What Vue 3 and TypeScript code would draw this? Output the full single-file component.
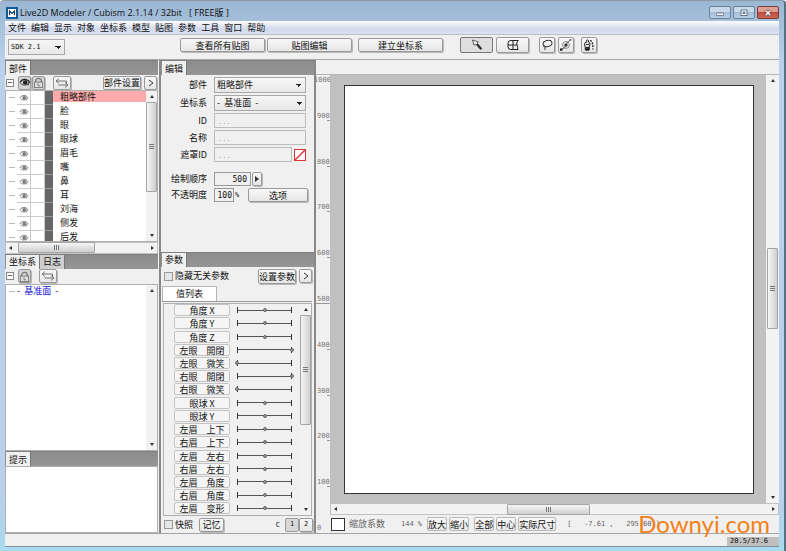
<script setup lang="ts">
import { ref } from 'vue'

interface Param { name: string; value: number }

const menus: string[] = ['文件', '编辑', '显示', '对象', '坐标系', '模型', '贴图', '参数', '工具', '窗口', '帮助']
const parts: string[] = ['粗略部件', '脸', '眼', '眼球', '眉毛', '嘴', '鼻', '耳', '刘海', '侧发', '后发']
const selectedPart = ref<string>('粗略部件')
const rulerMarks: number[] = [900, 800, 700, 600, 500, 400, 300, 200, 100, 0]
const params = ref<Param[]>([
  { name: '角度 X', value: 50 },
  { name: '角度 Y', value: 50 },
  { name: '角度 Z', value: 50 },
  { name: '左眼\u3000開閉', value: 100 },
  { name: '左眼\u3000微笑', value: 0 },
  { name: '右眼\u3000開閉', value: 100 },
  { name: '右眼\u3000微笑', value: 0 },
  { name: '眼球 X', value: 50 },
  { name: '眼球 Y', value: 50 },
  { name: '左眉\u3000上下', value: 50 },
  { name: '右眉\u3000上下', value: 50 },
  { name: '左眉\u3000左右', value: 50 },
  { name: '右眉\u3000左右', value: 50 },
  { name: '左眉\u3000角度', value: 50 },
  { name: '右眉\u3000角度', value: 50 },
  { name: '左眉\u3000变形', value: 50 },
])
const hideUnrelated = ref<boolean>(false)
const snapshot = ref<boolean>(false)
const order = ref<string>('500')
const opacity = ref<string>('100')
</script>

<template>
  <div class="window">
    <svg class="defs" aria-hidden="true">
      <symbol id="eye" viewBox="0 0 12 9">
        <path d="M1 4.5C2.5 1.8 5 1.2 7 1.6C9 2 10.4 3.2 11 4.6" fill="none" stroke="currentColor" stroke-width="1.2" />
        <path d="M1.5 5.4C4 7.6 8 7.6 10.6 5" fill="none" stroke="currentColor" stroke-width=".8" />
        <circle cx="6.2" cy="4.4" r="2.2" fill="currentColor" />
        <path d="M9.5 3.6L9 7.4" stroke="currentColor" stroke-width=".8" />
      </symbol>
      <symbol id="lock" viewBox="0 0 12 12">
        <path d="M3 6V4C3 .6 9 .6 9 4V6" fill="none" stroke="currentColor" stroke-width="1.3" />
        <rect x="1.5" y="5.5" width="9" height="6" fill="#ddd" stroke="currentColor" />
        <path d="M5.5 7V9.5H7.5" fill="none" stroke="currentColor" />
      </symbol>
      <symbol id="swap" viewBox="0 0 14 10">
        <path d="M4 .5L1 3L4 5.5M1 3H11.5V6M10 4.5L13 7L10 9.5M13 7H3.5" fill="none" stroke="currentColor" stroke-width=".9" />
      </symbol>
    </svg>

    <header class="titlebar">
      <svg class="logo" viewBox="0 0 12 12"><rect x="1" y="1" width="10" height="10" fill="#fff" stroke="#145a96" stroke-width="2" /><path d="M3.5 8.2V4L6 6.5L8.5 4V8.2" fill="none" stroke="#174a78" stroke-width="1.2" /></svg>
      <h1>Live2D Modeler / Cubism 2.1.14 / 32bit &nbsp; [ FREE版 ]</h1>
      <div class="winbtns">
        <button aria-label="最小化"><svg viewBox="0 0 12 8"><rect x="2.5" y="4" width="7" height="2.6" rx=".8" fill="#fff" stroke="#4d6077" stroke-width=".8" /></svg></button>
        <button aria-label="最大化"><svg viewBox="0 0 12 8"><rect x="3" y="1" width="6" height="5.6" fill="#fff" stroke="#4d6077" stroke-width=".8" /><rect x="5" y="3" width="2" height="1.6" fill="none" stroke="#4d6077" stroke-width=".8" /></svg></button>
        <button class="close" aria-label="关闭"><svg viewBox="0 0 12 8"><path d="M3.5 1.5L8.5 6.5M8.5 1.5L3.5 6.5" stroke="#6b3434" stroke-width="2.8" /><path d="M3.7 1.7L8.3 6.3M8.3 1.7L3.7 6.3" stroke="#fff" stroke-width="1.6" /></svg></button>
      </div>
    </header>

    <div class="client">
      <nav class="menubar">
        <a v-for="m in menus" :key="m" href="#">{{ m }}</a>
      </nav>

      <div class="toolbar">
        <select class="sdk combo mono" aria-label="SDK"><option>SDK 2.1</option></select>
        <div class="group main-actions">
          <button class="btn wide">查看所有贴图</button>
          <button class="btn wide">贴图编辑</button>
          <button class="btn wide apart">建立坐标系</button>
        </div>
        <div class="group modes">
          <button class="btn mode active" aria-label="选择"><svg viewBox="0 0 12 12"><path d="M1.5 1L3 6.2L4.6 5L9.4 10.6L10.8 9.4L6 4.2L7.4 3Z" fill="#fff" stroke="#333" stroke-width=".8" /><path d="M5.8 5L10.4 10" stroke="#111" stroke-width="1.2" /></svg></button>
          <button class="btn mode" aria-label="网格"><svg viewBox="0 0 12 12"><path d="M11.4 1.5H4Q1 1.5 1 4V8Q1 10.5 4 10.5H11.4M11 1.5Q9 4 10 6Q11 8.5 10.6 10.5M6 1.5V10.5M1 6H10" fill="none" stroke="#222" /></svg></button>
        </div>
        <div class="group tools">
          <button class="btn tool" aria-label="套索"><svg viewBox="0 0 12 12"><ellipse cx="6.5" cy="4.5" rx="4.5" ry="3" fill="none" stroke="#333" transform="rotate(-15 6.5 4.5)" /><path d="M3 6Q2 7.8 3.6 8T3.6 11" fill="none" stroke="#333" /></svg></button>
          <button class="btn tool" aria-label="变形路径"><svg viewBox="0 0 12 12"><circle cx="6" cy="6" r="3.4" fill="none" stroke="#888" /><circle cx="6" cy="6" r="1.6" fill="#222" /><path d="M1 10.5Q5 10 6 6T11 1" fill="none" stroke="#444" stroke-width=".8" /><rect x="0" y="9.5" width="2.4" height="2.2" fill="#111" /><rect x="9.6" y="0" width="2" height="1.6" fill="#777" /></svg></button>
        </div>
        <button class="btn tool glue" aria-label="胶水"><svg viewBox="0 0 12 12"><path d="M2.2 11V8L1.5 5.2Q1.5 3.4 3.4 3.2V1.5Q4.5 .2 5.6 1.5V3.2Q7.3 3.4 7 5.4L6.2 8V11Z" fill="#ddd" stroke="#222" /><path d="M3 8.5H6V11H3ZM3.2 5.5H5.8" fill="#222" stroke="#222" /><path d="M7.2 1.4Q10.5 3 9.8 10.5" fill="none" stroke="#222" stroke-width="1.5" stroke-dasharray="1.8 1.2" /></svg></button>
      </div>

      <main class="body">
        <section class="column left">
          <div class="panel">
            <div class="tabs"><button class="tab">部件</button></div>
            <div class="tools-row">
              <button class="fold" aria-label="折叠">−</button>
              <button class="btn sq" aria-label="显示"><svg class="eye dark"><use href="#eye" /></svg></button>
              <button class="btn sq" aria-label="锁定"><svg class="lock"><use href="#lock" /></svg></button>
              <button class="btn swap" aria-label="切换"><svg><use href="#swap" /></svg></button>
              <button class="btn push">部件设置</button>
              <button class="btn more" aria-label="更多"><svg viewBox="0 0 6 8"><path d="M1 1L5 4L1 7" fill="none" stroke="#333" /></svg></button>
            </div>
            <div class="tree-wrap">
              <ul class="tree">
                <li v-for="p in parts" :key="p" :class="{ selected: p === selectedPart }" @click="selectedPart = p">
                  <span class="branch"></span>
                  <span class="cell"><svg class="eye"><use href="#eye" /></svg></span>
                  <span class="cell"></span>
                  <span class="stripe"></span>
                  <span class="label">{{ p }}</span>
                </li>
              </ul>
              <div class="vbar"><i class="arr up"></i><b class="thumb parts-thumb"></b><i class="arr down"></i></div>
            </div>
            <div class="hbar"><i class="arr lt"></i><b class="thumb parts-hthumb"></b><i class="arr rt"></i></div>
          </div>

          <div class="panel">
            <div class="tabs"><button class="tab">坐标系</button><button class="tab off">日志</button></div>
            <div class="tools-row">
              <button class="fold" aria-label="折叠">−</button>
              <button class="btn sq" aria-label="锁定"><svg class="lock"><use href="#lock" /></svg></button>
              <button class="btn swap" aria-label="切换"><svg><use href="#swap" /></svg></button>
            </div>
            <div class="tree-wrap">
              <ul class="tree deform"><li><span class="branch"></span><span class="base">-&nbsp; 基准面 &nbsp;-</span></li></ul>
              <div class="vbar"><i class="arr up"></i><i class="arr down"></i></div>
            </div>
          </div>

          <div class="panel">
            <div class="tabs"><button class="tab">提示</button></div>
            <div class="hint"></div>
          </div>
        </section>

        <section class="column middle">
          <div class="panel">
            <div class="tabs"><button class="tab">编辑</button></div>
            <form class="form" @submit.prevent>
              <label for="f-part">部件</label>
              <select id="f-part" class="combo"><option>粗略部件</option></select>
              <label for="f-deform">坐标系</label>
              <select id="f-deform" class="combo"><option>-&nbsp; 基准面 &nbsp;-</option></select>
              <label for="f-id">ID</label>
              <input id="f-id" class="field" placeholder="..." disabled />
              <label for="f-name">名称</label>
              <input id="f-name" class="field" placeholder="..." disabled />
              <label for="f-mask">遮罩ID</label>
              <div class="inline">
                <input id="f-mask" class="field" placeholder="..." disabled />
                <svg class="nomask" viewBox="0 0 12 12"><rect x=".5" y=".5" width="11" height="11" fill="#fff" stroke="#d33" /><path d="M1 11L11 1" stroke="#d33" stroke-width="1.4" /></svg>
              </div>
              <label for="f-order" class="spaced">绘制顺序</label>
              <div class="inline spaced tight">
                <input id="f-order" v-model="order" class="field num order" />
                <button class="btn step" aria-label="绘制顺序选项"><svg viewBox="0 0 6 8"><path d="M1 1L5 4L1 7Z" fill="#333" /></svg></button>
              </div>
              <label for="f-opacity">不透明度</label>
              <div class="inline tight">
                <input id="f-opacity" v-model="opacity" class="field num opacity" />
                <span class="mono">%</span>
                <button class="btn options">选项</button>
              </div>
            </form>
          </div>

          <div class="panel">
            <div class="tabs"><button class="tab">参数</button></div>
            <div class="param-tools">
              <label class="check"><input v-model="hideUnrelated" type="checkbox" />隐藏无关参数</label>
              <button class="btn">设置参数</button>
              <button class="btn more" aria-label="更多"><svg viewBox="0 0 6 8"><path d="M1 1L5 4L1 7" fill="none" stroke="#333" /></svg></button>
            </div>
            <div class="subtabs"><button class="subtab">值列表</button></div>
            <div class="param-wrap">
              <div class="params">
                <div v-for="(p, i) in params" :key="p.name" class="param">
                  <label :for="'param-' + i">{{ p.name }}</label>
                  <input :id="'param-' + i" v-model.number="p.value" type="range" min="0" max="100" />
                </div>
              </div>
              <div class="vbar"><i class="arr up"></i><b class="thumb param-thumb"></b><i class="arr down"></i></div>
            </div>
            <div class="param-foot">
              <label class="check"><input v-model="snapshot" type="checkbox" />快照</label>
              <button class="btn">记忆</button>
              <span class="mono push-label">C</span>
              <button class="btn page mono pressed">1</button>
              <button class="btn page mono">2</button>
            </div>
          </div>
        </section>

        <section class="view">
          <div class="ruler-top"></div>
          <div class="ruler mono">
            <div v-for="(n, i) in rulerMarks" :key="n" class="mark" :class="{ mid: n === 500, zero: n === 0 }">
              <span v-if="i === 0" class="first">1000</span>
              <span class="last">{{ n }}</span>
            </div>
          </div>
          <div class="stage"><div class="sheet"></div></div>
          <div class="vbar"><i class="arr up"></i><b class="thumb view-thumb"></b><i class="arr down"></i></div>
          <div class="hbar"><i class="arr lt"></i><b class="thumb view-hthumb"></b><i class="arr rt"></i></div>
          <div class="zoombar">
            <button class="swatch" aria-label="背景颜色"></button>
            <span class="muted">缩放系数</span>
            <span class="muted mono zoom">144 %</span>
            <button class="btn flat">放大</button>
            <button class="btn flat">缩小</button>
            <button class="btn flat next">全部</button>
            <button class="btn flat">中心</button>
            <button class="btn flat">实际尺寸</button>
            <span class="muted mono coords">[ &nbsp;&nbsp;-7.61 ,&nbsp; &nbsp;295.60 ]</span>
          </div>
          <div class="watermark">Downyi.com</div>
        </section>
      </main>

      <footer class="status"><span class="mono">20.5/37.6</span></footer>
    </div>
  </div>
</template>

<style>
body {
  margin: 0;
}
</style>

<style scoped>
* {
  box-sizing: border-box;
}
.window {
  display: flex;
  flex-direction: column;
  height: 100vh;
  min-height: 480px;
  padding: 0 5px 4px;
  border-top: 1px solid #8c9aa8;
  border-right: 2px solid #4f7180;
  border-radius: 4px 4px 0 0;
  background: linear-gradient(#9ab6d2, #b9d1ea 60px, #b9d1ea 90%, #a9daf0);
  color: #111;
  font: 9px/12px "Noto Sans CJK SC", sans-serif;
  overflow: hidden;
}
.defs {
  position: absolute;
  width: 0;
  height: 0;
}
button, input, select {
  margin: 0;
  padding: 0;
  font: inherit;
  color: inherit;
}
svg {
  display: block;
}
.mono {
  font-family: "DejaVu Sans Mono", monospace;
  font-size: 7px;
}

/* title bar */
.titlebar {
  display: flex;
  align-items: center;
  flex: none;
  height: 20px;
  padding: 3px 0 0 1px;
}
.logo {
  width: 12px;
  height: 12px;
}
h1 {
  flex: 1;
  margin: 0 0 0 2px;
  font: 9px/14px "Open Sans", "Noto Sans CJK SC", sans-serif;
}
.winbtns {
  display: flex;
  gap: 2px;
}
.winbtns button {
  display: grid;
  place-items: center;
  width: 22px;
  height: 13px;
  border: 1px solid #6a8199;
  border-radius: 2px;
  background: linear-gradient(#c8d9ea 50%, #a4bcd6 50%, #b8d0e8);
}
.winbtns svg {
  width: 12px;
  height: 8px;
}
.winbtns .close {
  border-color: #7a3a38;
  background: linear-gradient(#dda096 40%, #bd4a3a 50%, #cc6a55);
}

.client {
  display: flex;
  flex: 1;
  flex-direction: column;
  min-height: 0;
  border-bottom: 1px solid #7d8d9c;
  background: #f0f0f0;
}
.menubar {
  display: flex;
  flex: none;
  gap: 5px;
  height: 14px;
  padding: 0 3px;
  border-bottom: 1px solid #b9bfcc;
  background: linear-gradient(#fdfdff, #d3daed 60%, #dbe1f2);
  line-height: 13px;
}
.menubar a {
  color: #111;
  text-decoration: none;
}

/* controls */
.btn {
  display: grid;
  place-items: center;
  padding: 0;
  border: 1px solid #9a9a9a;
  border-radius: 2px;
  background: linear-gradient(#f8f8f8, #e6e6e6);
  box-shadow: 1px 1px 0 #b9b9b9;
  line-height: 11px;
  white-space: nowrap;
}
.combo {
  appearance: none;
  height: 16px;
  padding: 0 10px 0 2px;
  border: 1px solid #a8a8a8;
  border-radius: 0;
  background:
    linear-gradient(to top right, transparent 50%, #222 50%) right 6px center / 3px 3px no-repeat,
    linear-gradient(to top left, transparent 50%, #222 50%) right 3px center / 3px 3px no-repeat,
    linear-gradient(#f7f7f7, #e8e8e8);
}
.field {
  min-width: 0;
  height: 15px;
  padding: 0 3px;
  border: 1px solid #bcbcbc;
  background: #f0f0f0;
}
.field::placeholder {
  color: #999;
  font-family: "DejaVu Sans Mono", monospace;
  font-size: 7px;
}
.toolbar {
  display: flex;
  align-items: center;
  flex: none;
  height: 25px;
  padding: 0 3px;
  border-bottom: 1px solid #a8a8a8;
}
.group {
  display: flex;
  gap: 3px;
}
.sdk {
  width: 57px;
}
.main-actions {
  gap: 2px;
  margin: 0 17px 0 115px;
}
.toolbar > :not(.sdk) {
  margin-bottom: 4px;
}
.wide {
  width: 85px;
  height: 14px;
}
.apart {
  margin-left: 4px;
}
.mode {
  width: 33px;
  height: 16px;
}
.active {
  background: #dedede;
  border-color: #777;
  box-shadow: none;
}
.tools {
  margin-left: 10px;
}
.tool {
  width: 16px;
  height: 16px;
}
.glue {
  margin-left: 7px;
}
.mode svg, .tool svg {
  width: 12px;
  height: 12px;
}

/* layout */
.body {
  display: grid;
  flex: 1;
  grid-template-columns: 156px 155px 1fr;
  min-height: 0;
}
.column {
  display: grid;
  grid-template-columns: minmax(0, 1fr);
  min-height: 0;
}
.left {
  grid-template-rows: 194fr 198fr 82fr;
  padding-right: 1px;
  border-right: 2px solid #888;
}
.middle {
  grid-template-rows: 192fr 282fr;
  border-right: 2px solid #888;
}
.panel {
  display: flex;
  flex-direction: column;
  min-height: 0;
  overflow: hidden;
  border-top: 1px solid #808080;
}
.tabs {
  display: flex;
  flex: none;
  height: 14px;
  padding-left: 1px;
  background: linear-gradient(#8c8c8c, #959595);
}
.tab {
  padding: 0 3px;
  border: 0;
  border-right: 1px solid #777;
  background: #f0f0f0;
  line-height: 13px;
}
.off {
  background: #cfcfcf;
}
.tools-row {
  display: flex;
  align-items: center;
  flex: none;
  height: 15px;
}
.tools-row .btn {
  height: 14px;
}
.fold {
  display: grid;
  place-items: center;
  width: 8px;
  height: 8px;
  margin: 0 4px 0 1px;
  border: 1px solid #888;
  background: #fff;
  line-height: 6px;
}
.tools-row .sq {
  width: 13px;
  margin-right: 1px;
  background: #d4d4d4;
}
.tools-row .swap {
  width: 18px;
  margin-left: 7px;
}
.swap svg {
  width: 14px;
  height: 10px;
  color: #666;
}
.eye {
  width: 12px;
  height: 9px;
  color: #777;
}
.dark {
  color: #222;
}
.lock {
  width: 11px;
  height: 11px;
  color: #777;
}
.tools-row .push {
  width: 38px;
  margin-left: auto;
}
.more {
  width: 13px;
  height: 14px;
  margin: 0 1px 0 3px;
}
.more svg {
  width: 6px;
  height: 8px;
}
.tree-wrap, .param-wrap {
  display: flex;
  flex: 1;
  min-height: 0;
  border: 1px solid #b0b0b0;
}
.tree {
  flex: 1;
  margin: 0;
  padding: 0;
  overflow: hidden;
  background: #fff;
  list-style: none;
}
.tree li {
  display: flex;
  height: 14px;
}
.branch {
  width: 6px;
  height: 7px;
  margin: 0 2px 0 3px;
  border-bottom: 1px solid #bbb;
}
.cell {
  display: grid;
  place-items: center;
  width: 14px;
  border: 1px solid #ccc;
  border-width: 0 1px 1px 0;
}
.cell .eye {
  width: 10px;
  height: 8px;
}
.stripe {
  width: 8px;
  border-bottom: 1px solid #999;
  background: #666;
}
.label {
  flex: 1;
  height: 11px;
  padding-left: 7px;
  line-height: 11px;
}
.selected .label {
  background: #ffabab;
}
.base {
  color: #1414d8;
}
.deform li {
  line-height: 12px;
}
.hint {
  flex: 1;
  border: 1px solid #b0b0b0;
  background: #fff;
}

/* scroll bars */
.vbar, .hbar {
  display: flex;
  align-items: center;
  justify-content: space-between;
  flex: none;
  background: #f2f2f2;
}
.vbar {
  flex-direction: column;
  width: 11px;
}
.hbar {
  height: 12px;
  border: 1px solid #c2c2c2;
}
.arr {
  width: 0;
  height: 0;
  margin: 4px 3px;
  border: 2px solid transparent;
}
.up { border-bottom: 3px solid #333; border-top: 0; }
.down { border-top: 3px solid #333; border-bottom: 0; }
.lt { border-right: 3px solid #333; border-left: 0; }
.rt { border-left: 3px solid #333; border-right: 0; }
.thumb {
  border: 1px solid #a5a5a5;
  border-radius: 1px;
}
.vbar .thumb {
  width: 11px;
  background: repeating-linear-gradient(#777 0 1px, transparent 1px 2px) center / 5px 5px no-repeat,
    linear-gradient(90deg, #f6f6f6, #dedede 60%, #cfcfcf);
}
.hbar .thumb {
  height: 11px;
  background: repeating-linear-gradient(90deg, #777 0 1px, transparent 1px 2px) center / 5px 5px no-repeat,
    linear-gradient(#f6f6f6, #dedede 60%, #cfcfcf);
}
.parts-thumb {
  height: 60%;
  margin-bottom: auto;
}
.hbar .parts-hthumb {
  width: 51%;
  margin: 0 auto 0 3px;
}
.param-thumb {
  height: 52%;
  margin-bottom: auto;
}

/* edit form */
.form {
  display: grid;
  grid-template-columns: 46px minmax(0, 1fr);
  align-items: center;
  gap: 2px 7px;
  padding: 2px 8px 0 0;
}
.form > label {
  text-align: right;
  white-space: nowrap;
}
.form > .combo, .form > .field {
  width: 100%;
}
.inline {
  display: flex;
  align-items: center;
  gap: 2px;
}
.inline > #f-mask {
  flex: 1;
}
.nomask {
  width: 12px;
  height: 12px;
}
.tight {
  gap: 1px;
}
.form .spaced {
  margin-top: 8px;
}
.num {
  height: 14px;
  border-color: #999;
  text-align: right;
  font-family: "DejaVu Sans Mono", monospace;
  font-size: 8px;
}
.order {
  width: 37px;
}
.opacity {
  width: 20px;
  padding: 0 1px;
}
.step {
  width: 10px;
  height: 14px;
}
.step svg {
  width: 6px;
  height: 8px;
}
.options {
  width: 60px;
  height: 14px;
  margin: 0 -2px 0 auto;
}

/* parameters */
.param-tools, .param-foot {
  display: flex;
  align-items: center;
  flex: none;
  padding: 0 1px 0 3px;
}
.param-tools {
  height: 19px;
}
.param-tools > .btn:not(.more) {
  height: 15px;
  margin-left: auto;
}
.check {
  display: flex;
  align-items: center;
  gap: 2px;
}
.check input {
  appearance: none;
  width: 9px;
  height: 9px;
  border: 1px solid #999;
  background: #e4e6e8;
}
.check input:checked {
  background: #557;
}
.subtabs {
  display: flex;
  flex: none;
  height: 16px;
  margin: 0 2px 0 1px;
  border-bottom: 1px solid #999;
}
.subtab {
  width: 55px;
  border: 1px solid #b5b5b5;
  border-bottom: 0;
  background: #fff;
}
.param-wrap {
  margin: 1px 2px 0;
}
.params {
  display: grid;
  flex: 1;
  grid-template-columns: minmax(0, 1fr);
  grid-template-rows: repeat(16, 1fr);
  overflow: hidden;
}
.param {
  display: flex;
  align-items: center;
  min-height: 0;
  gap: 5px;
  padding: 0 6px 0 10px;
}
.param label {
  flex: none;
  width: 56px;
  height: 12px;
  border: 1px solid #c4c4c4;
  border-radius: 2px;
  background: #f5f5f5;
  line-height: 11px;
  text-align: center;
}
.param input {
  appearance: none;
  flex: 1;
  min-width: 0;
  height: 6px;
  background: linear-gradient(#333, #333) 2px center / 1px 6px no-repeat,
    linear-gradient(#333, #333) right 2px center / 1px 6px no-repeat,
    linear-gradient(#555, #555) center / calc(100% - 4px) 1px no-repeat;
}
.param input::-webkit-slider-thumb {
  appearance: none;
  width: 4px;
  height: 4px;
  border: 1px solid #666;
  border-radius: 2px;
  background: #999;
}
.param-foot {
  height: 17px;
}
.param-foot .btn {
  height: 14px;
}
.param-foot > .btn:not(.page) {
  width: 25px;
  margin-left: 6px;
}
.push-label {
  margin: 0 5px 0 auto;
}
.page {
  width: 14px;
}
.pressed {
  background: #d8d8d8;
  box-shadow: none;
}

/* canvas view */
.view {
  position: relative;
  display: grid;
  grid-template-columns: 14px 1fr 13px;
  grid-template-rows: 15px 1fr 12px 18px;
  min-width: 0;
  min-height: 0;
}
.ruler-top {
  grid-column: 1 / -1;
  border-bottom: 1px solid #b5b5b5;
}
.ruler {
  display: grid;
  grid-row: 2 / 5;
  grid-template-columns: minmax(0, 1fr);
  grid-auto-rows: 1fr;
  color: #777;
  line-height: 10px;
}
.mark {
  display: flex;
  flex-direction: column;
  justify-content: space-between;
  background: linear-gradient(#999, #999) right bottom / 3px 1px no-repeat;
}
.mark.mid {
  background-size: 100% 1px;
}
.mark.zero {
  background: none;
}
.first {
  margin-left: -2px;
}
.last {
  margin-top: auto;
  padding-left: 1px;
}
.stage {
  padding: 10px 12px 9px 14px;
  background: #c0c0c0;
}
.sheet {
  height: 100%;
  border: 1px solid #333;
  background: #fff;
}
.view > .vbar {
  width: auto;
}
.view-thumb {
  height: 19%;
  margin-top: auto;
}
.view > .vbar::after {
  content: "";
  order: 1;
  flex: 0 0 38%;
}
.view > .vbar .down {
  order: 2;
}
.view > .hbar {
  grid-column: 2 / 4;
  grid-row: 3;
}
.hbar .view-hthumb {
  width: 83px;
  margin-right: 13px;
}
.zoombar {
  display: flex;
  align-items: center;
  grid-column: 2 / 4;
  grid-row: 4;
  gap: 2px;
  white-space: nowrap;
}
.swatch {
  width: 14px;
  height: 13px;
  margin: 0 2px 0 1px;
  border: 1px solid #333;
  background: #fff;
}
.muted {
  color: #666;
}
.zoom {
  margin: 0 3px 0 14px;
}
.flat {
  height: 14px;
  border-color: #b8b8b8;
  box-shadow: none;
}
.next {
  margin-left: 3px;
}
.coords {
  margin-left: 9px;
}
.watermark {
  position: absolute;
  right: 9px;
  bottom: -3px;
  color: #f57f17;
  font: 24px/24px Lato, sans-serif;
}
.status {
  display: flex;
  align-items: flex-end;
  justify-content: flex-end;
  flex: none;
  height: 13px;
  border-top: 1px solid #a5a5a5;
}
.status span {
  width: 52px;
  height: 9px;
  padding-left: 3px;
  background: #bfbfbf;
  font-size: 7px;
  line-height: 9px;
}
</style>
